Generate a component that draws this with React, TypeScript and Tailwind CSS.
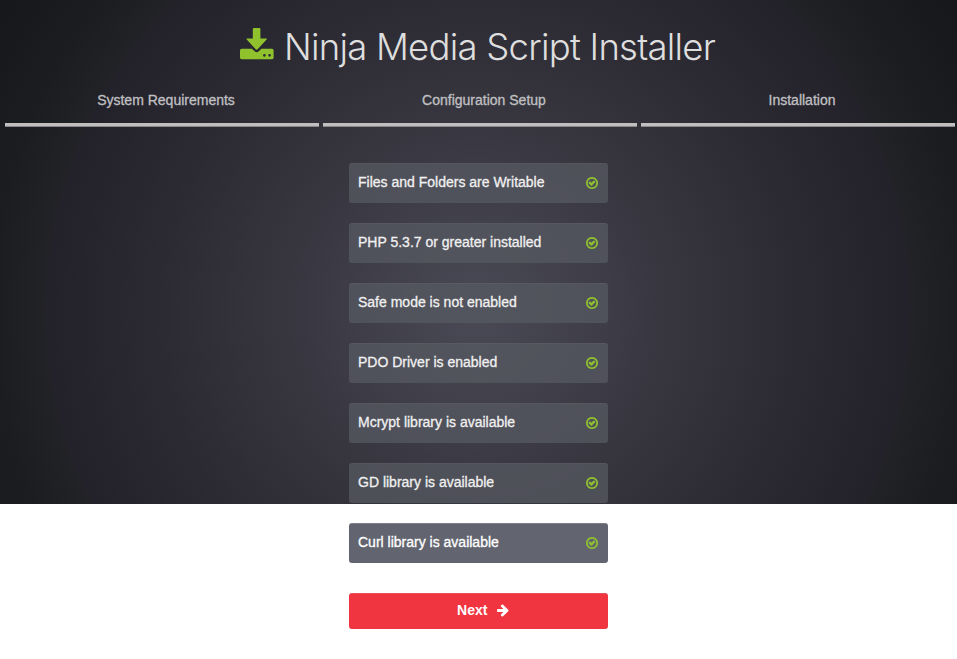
import React from "react";

const requirements = [
  "Files and Folders are Writable",
  "PHP 5.3.7 or greater installed",
  "Safe mode is not enabled",
  "PDO Driver is enabled",
  "Mcrypt library is available",
  "GD library is available",
  "Curl library is available",
];

const steps = ["System Requirements", "Configuration Setup", "Installation"];

function DownloadIcon() {
  return (
    <svg className="h-8 w-[34px] shrink-0" viewBox="0 0 34 32" fill="#90c22e">
      <path d="M13.8 0h5.600q1 0 1 1v9.400h5.600q1.500 0 .6 1.200l-8.700 9.500q-1.200 1.200-2.400 0L6.700 11.600q-.9-1.200.6-1.200h5.500V1q0-1 1-1z" />
      <path
        fillRule="evenodd"
        d="M1.600 20.800h10.300l2.700 2.500q2.100 1.700 4.200 0l2.700-2.500h10.500q1.600 0 1.600 1.600v7.200q0 1.600-1.600 1.600H1.600Q0 31.200 0 29.600v-7.200q0-1.600 1.600-1.600zM24.400 26a1.350 1.350 0 1 0 0 2.700 1.350 1.350 0 0 0 0-2.700zM29.600 26a1.350 1.350 0 1 0 0 2.700 1.350 1.350 0 0 0 0-2.700z"
      />
    </svg>
  );
}

function CheckIcon() {
  return (
    <svg className="size-3.5 shrink-0" viewBox="0 0 1792 1792" fill="#90c22e">
      <path d="M1299 813l-422 422q-24 24-57 24t-57-24l-294-294q-24-24-24-57t24-57l102-102q24-24 57-24t57 24l135 135 263-263q24-24 57-24t57 24l102 102q24 24 24 57t-24 57zm141 83q0-148-73-273t-198-198-273-73-273 73-198 198-73 273 73 273 198 198 273 73 273-73 198-198 73-273zm224 0q0 209-103 385.5t-279.5 279.5-385.5 103-385.5-103-279.5-279.5-103-385.5 103-385.5 279.5-279.5 385.5-103 385.5 103 279.5 279.5 103 385.5z" />
    </svg>
  );
}

function ArrowIcon() {
  return (
    <svg className="size-3.5 shrink-0" viewBox="0 0 1792 1792" fill="white">
      <path d="M1600 960q0 54-37 91l-651 651q-39 37-91 37-51 0-90-37l-75-75q-38-38-38-91t38-91l293-293h-704q-52 0-84.5-37.5t-32.5-90.5v-128q0-53 32.5-90.5t84.5-37.5h704l-293-294q-38-36-38-90t38-90l75-75q38-38 90-38 53 0 91 38l651 651q37 35 37 90z" />
    </svg>
  );
}

export default function App() {
  return (
    <div className="h-[659px] w-[957px] overflow-hidden bg-white font-['Liberation_Sans',Arial,sans-serif] text-sm">
      <div className="h-[504px] bg-[radial-gradient(circle_570px_at_478px_310px,#4a4a56_0%,#3d3c47_23%,#35343d_38%,#2c2b34_55%,#23222b_75%,#212225_77%,#1c1d20_85%,#16171a_100%)]">
        <header className="flex h-[84px] items-start pl-[240px] pt-7">
          <DownloadIcon />
          <h1 className="-mt-[3px] ml-[10px] whitespace-nowrap font-['Inter',sans-serif] text-[36.5px] font-light leading-[44px] tracking-[-0.76px] text-[#dedede]">
            Ninja Media Script Installer
          </h1>
        </header>
        <nav className="grid h-[43px] grid-cols-3 gap-1 pl-[5px] pr-[2px]">
          {steps.map((step) => (
            <div
              key={step}
              className="flex flex-col justify-between pt-1.5 text-center leading-5 text-[#c0c0c2] [-webkit-text-stroke:0.3px]"
            >
              <span className="pl-2">{step}</span>
              <span className="h-1 border-b border-[#8a888b] bg-[#c0bebe]" />
            </div>
          ))}
        </nav>
        <main className="ml-[349px] w-[259.4px] pt-9">
          <ul className="flex flex-col gap-5">
            {requirements.map((label) => (
              <li
                key={label}
                className="flex h-10 items-start justify-between rounded-[3px] border-t border-[#85868c]/10 bg-[#575a62]/75 px-[9px] pt-2 text-[#f0f0f0] last:border-[#7d7e86] last:bg-[#62656f] last:text-white"
              >
                <span className="whitespace-nowrap leading-5 [-webkit-text-stroke:0.3px]">
                  {label}
                </span>
                <span className="pt-1">
                  <CheckIcon />
                </span>
              </li>
            ))}
          </ul>
          <button className="mt-[30px] flex h-9 w-full items-start justify-center gap-[9px] rounded-[3px] border-t border-[#e8505a] bg-[#f03540] pl-[10px] pt-1.5 font-bold leading-5 text-white">
            Next
            <span className="pt-[2.5px]">
              <ArrowIcon />
            </span>
          </button>
        </main>
      </div>
    </div>
  );
}
